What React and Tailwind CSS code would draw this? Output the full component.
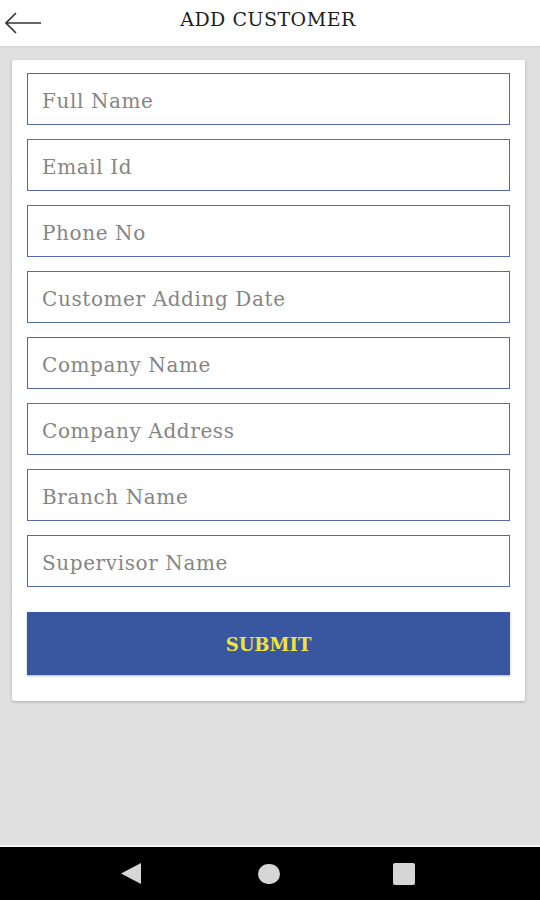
import { useState } from 'react'

const fields = [
  'Full Name',
  'Email Id',
  'Phone No',
  'Customer Adding Date',
  'Company Name',
  'Company Address',
  'Branch Name',
  'Supervisor Name',
]

const serif = { fontFamily: '"DejaVu Serif", "Liberation Serif", serif' }

export default function App() {
  const [values, setValues] = useState({})

  return (
    <div className="w-[540px] h-[900px] flex flex-col bg-[#e0e0e0] overflow-hidden" style={serif}>
      {/* top bar */}
      <div className="h-[46px] bg-white flex items-center relative shadow-[0_1px_2px_rgba(0,0,0,0.08)]">
        <svg className="absolute left-[5px] top-[12px]" width="37" height="22" viewBox="0 0 37 22" fill="none">
          <path d="M1 11 H36 M11 1 L1 11 L11 21" stroke="#333" strokeWidth="1.6" />
        </svg>
        <div className="flex-1 text-center text-[19px] text-[#1e1e1e] tracking-[0.5px] pb-[7px] pr-[4px]">ADD CUSTOMER</div>
      </div>

      {/* content */}
      <div className="flex-1 px-[12px] pt-[14px]">
        <div className="w-[513px] bg-white rounded-[2px] shadow-[0_1px_3px_rgba(0,0,0,0.25)] px-[15px] pt-[13px] pb-[26px]">
          <div className="flex flex-col gap-[14px]">
            {fields.map(f => (
              <input
                key={f}
                placeholder={f}
                value={values[f] || ''}
                onChange={e => setValues({ ...values, [f]: e.target.value })}
                className="h-[52px] w-full border-[1.5px] border-[#5467b4] px-[14px] pt-[3px] text-[20px] tracking-[0.6px] text-[#333] placeholder:text-[#858585] outline-none"
                style={serif}
              />
            ))}
          </div>
          <button
            className="mt-[25px] h-[63px] w-full bg-[#3957a0] text-[#f2e33c] text-[18px] font-bold pt-[2px] shadow-[0_1px_2px_rgba(0,0,0,0.3)]"
            style={serif}
          >
            SUBMIT
          </button>
        </div>
      </div>

      {/* android nav bar */}
      <div className="h-[2px] bg-[#f4f4f4]" />
      <div className="h-[53px] bg-black flex items-center">
        <svg className="ml-[120px]" width="22" height="23" viewBox="0 0 22 23">
          <path d="M21 1 L1 11.5 L21 22 Z" fill="#d6d6d6" />
        </svg>
        <div className="ml-[116px] w-[22px] h-[20px] rounded-full bg-[#d6d6d6]" />
        <div className="ml-[113px] w-[22px] h-[22px] rounded-[2px] bg-[#d6d6d6]" />
      </div>
    </div>
  )
}
